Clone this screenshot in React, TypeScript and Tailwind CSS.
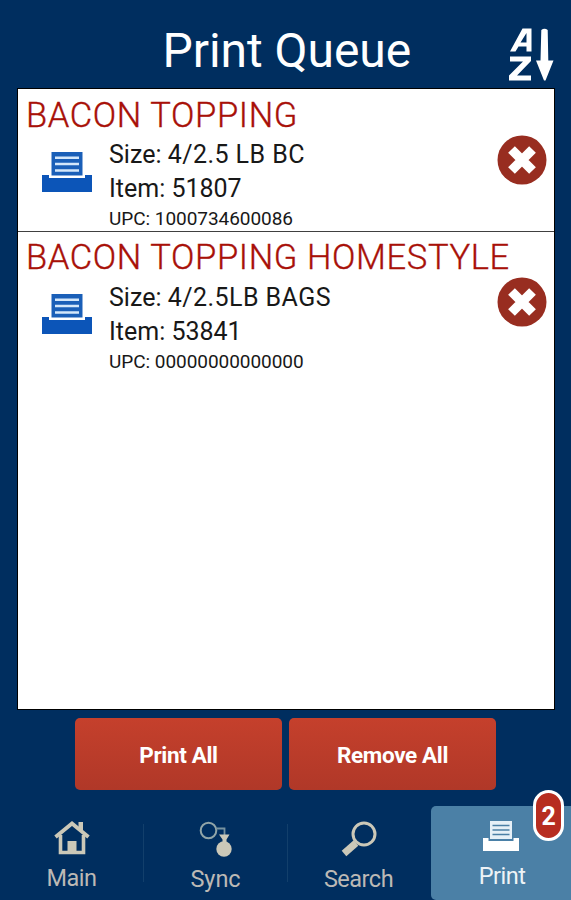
type QueueItem = { name: string; size: string; item: string; upc: string };

const items: QueueItem[] = [
  { name: 'BACON TOPPING', size: '4/2.5 LB BC', item: '51807', upc: '1000734600086' },
  { name: 'BACON TOPPING HOMESTYLE', size: '4/2.5LB BAGS', item: '53841', upc: '00000000000000' },
];

function SortIcon() {
  return (
    <svg width="48" height="54" viewBox="0 0 48 54">
      <path d="M4 24.500 16.500 1.500H25.500V24.500H20.500V19.500H12.500L9.500 24.500ZM14.500 15.500H20.500V6Z" fill="#fff" fillRule="evenodd" />
      <path d="M4 29.500H25V34L11 48.500H25V53.500H3V48.500L17 34.500H4Z" fill="#fff" />
      <path d="M35.300 3Q38.500 0.500 41.700 3L42.300 33.500H47.500L39.500 53.500H38L30 33.500H34.500Z" fill="#fff" />
    </svg>
  );
}

function QueuePrinter() {
  return (
    <svg width="52" height="42" viewBox="0 0 52 42">
      <path d="M1 24H8V27H44V24H51V41H1Z" fill="#0c55b8" />
      <path d="M10.500 1H41.500V26H10.500Z" fill="#1a5fb8" />
      <path d="M8 25.500H44" stroke="#fff" strokeWidth="2" />
      <path d="M14 6.800H38M14 13H38M14 19.500H38" stroke="#d4e7fa" strokeWidth="2.400" />
    </svg>
  );
}

function RemoveIcon() {
  return (
    <svg width="50" height="50" viewBox="0 0 50 50">
      <circle cx="25" cy="25" r="24.500" fill="#982d20" />
      <path d="M14.500 14.500 35.500 35.500M35.500 14.500 14.500 35.500" stroke="#fff" strokeWidth="9.500" />
    </svg>
  );
}

function HomeIcon() {
  return (
    <svg width="36" height="34" viewBox="0 0 36 34" fill="none" stroke="#cbc8b8">
      <path d="M1.500 16 18 2.500 34.500 16" strokeWidth="3.800" />
      <path d="M6.500 14V31.500H29.500V14" strokeWidth="3.600" />
      <path d="M24.500 1H29V12L24.500 8ZM13.500 20H22.500V32H13.500Z" fill="#cbc8b8" stroke="none" />
    </svg>
  );
}

function SyncIcon() {
  return (
    <svg width="34" height="37" viewBox="0 0 34 37" fill="none">
      <circle cx="9.500" cy="9.500" r="7.800" stroke="#91a5a8" strokeWidth="2" />
      <path d="M17.500 7.500H25.500V14" stroke="#7893a0" strokeWidth="1.800" />
      <path d="M20 13.500H30.500L27.500 18.500V22H23.500V18.500Z" fill="#cbc8b8" />
      <circle cx="25" cy="28" r="7.700" fill="#cbc8b8" />
    </svg>
  );
}

function SearchIcon() {
  return (
    <svg width="36" height="36" viewBox="0 0 36 36" fill="none" stroke="#cbc8b8">
      <circle cx="23" cy="13" r="11" strokeWidth="3" />
      <path d="M15 22 3 32.500" strokeWidth="7" />
    </svg>
  );
}

function TabPrinter() {
  return (
    <svg width="36" height="30" viewBox="0 0 36 30">
      <path d="M0 17H5.500V20H30.500V17H36V30H0Z" fill="#fff" />
      <path d="M6 18.500H30" stroke="#4b80a8" strokeWidth="1.500" />
      <path d="M7 0H29V18H7Z" fill="#e6f0f7" />
      <path d="M9.500 4.500H26.500M9.500 9H26.500M9.500 13.500H26.500" stroke="#4b7fa5" strokeWidth="1.500" />
    </svg>
  );
}

function QueueRow({ entry, divided }: { entry: QueueItem; divided: boolean }) {
  return (
    <li className={`h-[142px] border-t pt-[2px] text-[#181818] ${divided ? 'border-[#404040]' : 'border-transparent'}`}>
      <h2 className="pl-[8px] text-[34.5px] leading-[46px] font-light tracking-[0.63px] whitespace-nowrap text-[#a81008] [-webkit-text-stroke:0.35px_#a81008]">{entry.name}</h2>
      <div className="flex">
        <div className="w-[91px] pt-[13px] pl-[23px]"><QueuePrinter /></div>
        <div className={`flex-1 text-[25px] leading-[34px] whitespace-nowrap ${divided ? 'pt-px' : ''}`}>
          <p>Size: <span className="tracking-[0.45px]">{entry.size}</span></p>
          <p>Item: {entry.item}</p>
          <p className="text-[19px] leading-[26px] tracking-[-0.05px]">UPC: {entry.upc}</p>
        </div>
        <button className="mr-[7px] -mt-[3px] h-[50px]"><RemoveIcon /></button>
      </div>
    </li>
  );
}

export default function App() {
  return (
    <div className="flex h-[900px] w-[571px] flex-col overflow-hidden bg-[#002e5f] font-['Roboto',sans-serif]">
      <header className="flex h-[88px] shrink-0 justify-between pr-[17px] pl-[162.5px]">
        <h1 className="pt-[20px] text-[48px] leading-[61px] tracking-[-0.05px] whitespace-nowrap text-white">Print Queue</h1>
        <div className="pt-[27px]"><SortIcon /></div>
      </header>
      <ul className="mr-[16px] ml-[17px] h-[622px] shrink-0 border border-black bg-white">
        {items.map((entry, i) => <QueueRow key={entry.name} entry={entry} divided={i > 0} />)}
      </ul>
      <div className="flex h-[96px] shrink-0 justify-center gap-[7px] pt-[8px] text-[22.5px] font-bold tracking-[-0.35px] text-white">
        <button className="h-[72px] w-[207px] rounded-[5px] bg-linear-to-b from-[#c5402c] to-[#b03828] pt-[3px]">Print All</button>
        <button className="h-[72px] w-[207px] rounded-[5px] bg-linear-to-b from-[#c5402c] to-[#b03828] pt-[3px]">Remove All</button>
      </div>
      <nav className="flex flex-1 text-[23.5px] leading-[28px] tracking-[-0.5px] text-[#bcb9b5]">
        <div className="flex w-[143px] flex-col items-center pt-[15px]"><HomeIcon /><span className="mt-[9px]">Main</span></div>
        <div className="mt-[18px] h-[58px] w-px bg-[#123f6b]" />
        <div className="flex w-[143px] flex-col items-center pt-[15px]"><SyncIcon /><span className="mt-[7px] tracking-[-0.1px]">Sync</span></div>
        <div className="mt-[18px] h-[58px] w-px bg-[#123f6b]" />
        <div className="flex w-[141px] flex-col items-center pt-[15px]"><SearchIcon /><span className="mt-[8px]">Search</span></div>
        <div className="relative ml-[2px] flex h-[94px] w-[140px] flex-col items-center rounded-l-[5px] bg-[#4b80a6] pt-[15px] text-[#eef3f6]">
          <TabPrinter />
          <span className="mt-[11px] pl-[2px]">Print</span>
          <span className="absolute -top-[16px] right-[7px] flex h-[51px] w-[31px] items-center justify-center rounded-full border-[3px] border-white bg-[#b72d20] pt-[2px] text-[25px] font-bold text-white">2</span>
        </div>
      </nav>
    </div>
  );
}
